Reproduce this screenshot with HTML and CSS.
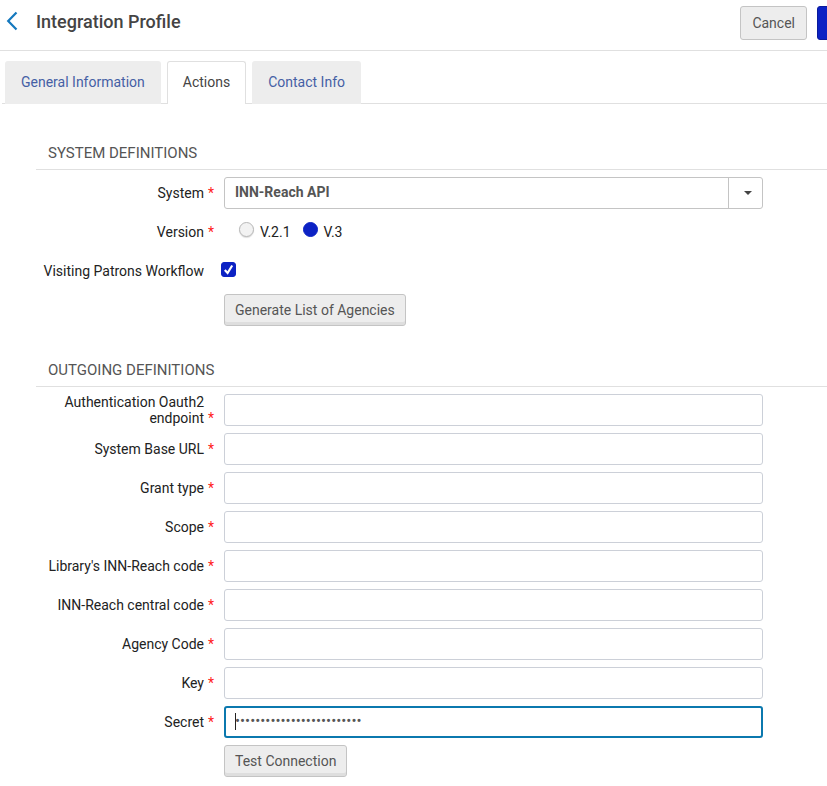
FILE: index.html
```html
<!DOCTYPE html>
<html lang="en">

<head>
    <meta charset="UTF-8">
    <meta name="viewport" content="width=device-width, initial-scale=1">
    <title>Integration Profile</title>
    <link rel="stylesheet" href="styles.css">
</head>

<body>

    <header class="page-header">
        <a class="back" href="#" aria-label="Back">
            <svg width="12" height="20" viewBox="0 0 12 20" aria-hidden="true">
                <path d="M10.5 1.5 L2.2 10 L10.5 18.5" fill="none" stroke="#1478be" stroke-width="2.2"/>
            </svg>
        </a>
        <h1>Integration Profile</h1>
        <div class="header-actions">
            <button type="button" class="btn btn-cancel">Cancel</button>
            <button type="button" class="btn btn-save" aria-label="Save"></button>
        </div>
    </header>

    <nav class="tabs">
        <a class="tab" href="#">General Information</a>
        <a class="tab active" href="#">Actions</a>
        <a class="tab" href="#">Contact Info</a>
    </nav>

    <form>
        <!-- System definitions -->
        <section>
            <h2>SYSTEM DEFINITIONS</h2>
            <div class="rows">
                <div class="row">
                    <label class="name" for="system"><span>System</span><span class="req">*</span></label>
                    <div class="select-box">
                        <select id="system">
                            <option>INN-Reach API</option>
                        </select>
                        <span class="arrow">
                            <svg width="8" height="4" viewBox="0 0 8 4" aria-hidden="true"><path d="M0 0H8L4 4Z" fill="#444"/></svg>
                        </span>
                    </div>
                </div>
                <div class="row">
                    <span class="name" id="version"><span>Version</span><span class="req">*</span></span>
                    <div class="radios" role="radiogroup" aria-labelledby="version">
                        <label><input type="radio" name="version">V.2.1</label>
                        <label><input type="radio" name="version" checked>V.3</label>
                    </div>
                </div>
                <div class="row">
                    <label class="name" for="visiting"><span>Visiting Patrons Workflow</span><span class="req"></span></label>
                    <div class="check-box">
                        <input type="checkbox" id="visiting" checked>
                        <svg width="15" height="15" viewBox="0 0 15 15" aria-hidden="true"><path d="M3.8 8 L6.6 11 L11.2 3.5" fill="none" stroke="#fff" stroke-width="2.2"/></svg>
                    </div>
                </div>
                <div class="row">
                    <span></span>
                    <button type="button" class="btn">Generate List of Agencies</button>
                </div>
            </div>
        </section>

        <!-- Outgoing definitions -->
        <section>
            <h2>OUTGOING DEFINITIONS</h2>
            <div class="rows">
                <div class="row">
                    <label class="name" for="endpoint"><span>Authentication Oauth2 endpoint</span><span class="req">*</span></label>
                    <input type="text" class="field" id="endpoint">
                </div>
                <div class="row">
                    <label class="name" for="baseUrl"><span>System Base URL</span><span class="req">*</span></label>
                    <input type="text" class="field" id="baseUrl">
                </div>
                <div class="row">
                    <label class="name" for="grantType"><span>Grant type</span><span class="req">*</span></label>
                    <input type="text" class="field" id="grantType">
                </div>
                <div class="row">
                    <label class="name" for="scope"><span>Scope</span><span class="req">*</span></label>
                    <input type="text" class="field" id="scope">
                </div>
                <div class="row">
                    <label class="name" for="libraryCode"><span>Library's INN-Reach code</span><span class="req">*</span></label>
                    <input type="text" class="field" id="libraryCode">
                </div>
                <div class="row">
                    <label class="name" for="centralCode"><span>INN-Reach central code</span><span class="req">*</span></label>
                    <input type="text" class="field" id="centralCode">
                </div>
                <div class="row">
                    <label class="name" for="agencyCode"><span>Agency Code</span><span class="req">*</span></label>
                    <input type="text" class="field" id="agencyCode">
                </div>
                <div class="row">
                    <label class="name" for="key"><span>Key</span><span class="req">*</span></label>
                    <input type="text" class="field" id="key">
                </div>
                <div class="row">
                    <label class="name" for="secret"><span>Secret</span><span class="req">*</span></label>
                    <input type="password" class="field current" id="secret" value="1234567890123456789012345">
                </div>
                <div class="row">
                    <span></span>
                    <button type="button" class="btn">Test Connection</button>
                </div>
            </div>
        </section>
    </form>

</body>

</html>
```
FILE: styles.css
```css
* {
    box-sizing: border-box;
}

body {
    margin: 0;
    font-family: Roboto, Arial, sans-serif;
    font-size: 14px;
    line-height: 16px;
    color: #222;
    background-color: #fff;
}

input, select, button {
    margin: 0;
    font-family: inherit;
    font-size: 14px;
    color: #555;
}

/* Header */
.page-header {
    display: flex;
    align-items: flex-start;
    padding: 6px 0 10px 6px;
    border-bottom: 1px solid #e0e0e0;
    overflow: hidden;
}

.back {
    display: flex;
    padding-top: 5px;
}

h1 {
    flex: 1;
    margin: 0 0 0 18px;
    font-size: 18px;
    font-weight: 500;
    line-height: 32px;
    color: #444;
}

.header-actions {
    display: flex;
    gap: 10px;
    margin-right: -50px;
}

.btn {
    justify-self: start;
    height: 32px;
    padding: 0 10px;
    border: 1px solid #c4c4c4;
    border-radius: 3px;
    background-color: #ededed;
    box-shadow: inset 0 -3px 0 #dedede;
    cursor: pointer;
}

.btn-cancel {
    height: 34px;
    padding: 0 11px;
    box-shadow: none;
}

.btn-save {
    width: 60px;
    height: 34px;
    border-color: #0a1a9c;
    background-color: #0c22c4;
    box-shadow: none;
}

/* Tabs */
.tabs {
    display: flex;
    gap: 6px;
    margin: 10px 0 0 2px;
    padding-left: 3px;
    border-bottom: 1px solid #e0e0e0;
}

.tab {
    margin-bottom: -1px;
    padding: 12px 15px 14px;
    border: 1px solid #ededed;
    border-bottom: 0;
    border-radius: 3px 3px 0 0;
    background-color: #ededed;
    color: #4560a5;
    text-decoration: none;
}

.tab.active {
    border-color: #e0e0e0;
    background-color: #fff;
    color: #444;
}

/* Form */
form {
    padding: 5px 0 9px 36px;
}

section {
    padding-top: 34px;
}

h2 {
    margin: 0;
    padding: 0 0 6px 12px;
    border-bottom: 1px solid #e0e0e0;
    font-size: 15px;
    font-weight: 400;
    line-height: 20px;
    color: #555;
}

.rows {
    display: grid;
    gap: 7px;
    padding: 7px 64px 0 0;
}

.row {
    display: grid;
    grid-template-columns: 178px 1fr;
    column-gap: 10px;
    align-items: center;
    min-height: 32px;
}

.name {
    display: flex;
    justify-content: flex-end;
    align-items: flex-end;
    text-align: right;
}

.req {
    flex: none;
    width: 10px;
    color: #ff1a1a;
}

.field {
    width: 100%;
    height: 32px;
    padding: 0 10px;
    border: 1px solid #ccd0d8;
    border-radius: 3px;
    background-color: #fff;
}

.field.current {
    padding: 0 9px 2px;
    border: 2px solid #0b78ae;
    outline: none;
    font-size: 15px;
    background-image: linear-gradient(#222, #222);
    background-size: 1px 17px;
    background-position: 9px 5px;
    background-repeat: no-repeat;
}

.select-box {
    position: relative;
}

.select-box select {
    display: block;
    width: 100%;
    height: 32px;
    padding: 0 45px 2px 10px;
    border: 1px solid #c4c4c4;
    border-radius: 3px;
    background-color: #fff;
    font-weight: bold;
    appearance: none;
}

/* the button part of the drop-down */
.arrow {
    position: absolute;
    top: 0;
    right: 0;
    bottom: 0;
    display: flex;
    align-items: center;
    justify-content: center;
    width: 35px;
    border-left: 1px solid #c4c4c4;
    padding-left: 4px;
    pointer-events: none;
}

.radios {
    display: flex;
    gap: 12px;
    padding-left: 15px;
}

.radios label {
    display: flex;
    align-items: flex-start;
    gap: 6px;
}

/* small lift so the circles and the box sit on the text's middle */
.radios input,
.check-box {
    margin-top: -2px;
}

.radios input {
    width: 15px;
    height: 15px;
    border: 1px solid #b8b8b8;
    border-radius: 50%;
    background-color: #f2f2f2;
    box-shadow: 0 1px 1px #ddd;
    appearance: none;
}

.radios input:checked {
    border-color: #0c22c4;
    background-color: #0c22c4;
    box-shadow: none;
}

.check-box {
    position: relative;
    margin-left: -3px;
    padding-bottom: 1px;
}

.check-box input {
    display: block;
    width: 15px;
    height: 15px;
    border-radius: 3px;
    background-color: #fff;
    border: 1px solid #b8b8b8;
    appearance: none;
}

.check-box input:checked {
    border-color: #0c22c4;
    background-color: #0c22c4;
}

.check-box svg {
    position: absolute;
    top: 0;
    left: 0;
    pointer-events: none;
}
```
